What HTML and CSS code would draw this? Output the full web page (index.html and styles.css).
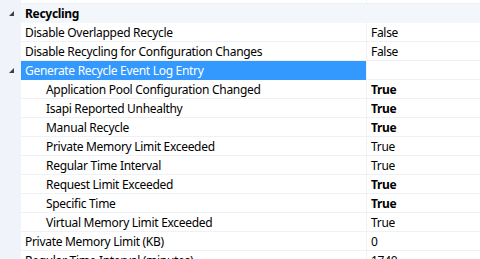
FILE: index.html
```html
<!DOCTYPE html>
<html lang="en">
<head>
    <meta charset="UTF-8">
    <title>Recycling</title>
    <link rel="stylesheet" href="styles.css">
</head>
<body>
    <div class="grid">
        <!-- row scrolled out above -->
        <div class="row stub">
            <div class="gutter"></div>
            <div class="name"></div>
            <div class="value"></div>
        </div>

        <div class="row category">
            <div class="gutter"><span class="arrow"></span></div>
            <div class="name">Recycling</div>
        </div>

        <div class="row">
            <div class="gutter"></div>
            <div class="name">Disable Overlapped Recycle</div>
            <div class="value">False</div>
        </div>
        <div class="row">
            <div class="gutter"></div>
            <div class="name">Disable Recycling for Configuration Changes</div>
            <div class="value">False</div>
        </div>
        <div class="row selected">
            <div class="gutter"><span class="arrow"></span></div>
            <div class="name">Generate Recycle Event Log Entry</div>
            <div class="value"></div>
        </div>
        <div class="row child">
            <div class="gutter"></div>
            <div class="name">Application Pool Configuration Changed</div>
            <div class="value bold">True</div>
        </div>
        <div class="row child">
            <div class="gutter"></div>
            <div class="name">Isapi Reported Unhealthy</div>
            <div class="value bold">True</div>
        </div>
        <div class="row child">
            <div class="gutter"></div>
            <div class="name">Manual Recycle</div>
            <div class="value bold">True</div>
        </div>
        <div class="row child">
            <div class="gutter"></div>
            <div class="name">Private Memory Limit Exceeded</div>
            <div class="value">True</div>
        </div>
        <div class="row child">
            <div class="gutter"></div>
            <div class="name">Regular Time Interval</div>
            <div class="value">True</div>
        </div>
        <div class="row child">
            <div class="gutter"></div>
            <div class="name">Request Limit Exceeded</div>
            <div class="value bold">True</div>
        </div>
        <div class="row child">
            <div class="gutter"></div>
            <div class="name">Specific Time</div>
            <div class="value bold">True</div>
        </div>
        <div class="row child">
            <div class="gutter"></div>
            <div class="name">Virtual Memory Limit Exceeded</div>
            <div class="value">True</div>
        </div>
        <div class="row">
            <div class="gutter"></div>
            <div class="name">Private Memory Limit (KB)</div>
            <div class="value">0</div>
        </div>
        <div class="row">
            <div class="gutter"></div>
            <div class="name">Regular Time Interval (minutes)</div>
            <div class="value">1740</div>
        </div>
    </div>
</body>
</html>
```

FILE: styles.css
```css
body {
    margin: 0;
    padding: 0;
    background-color: #fff;
    font-family: "Noto Sans", "Open Sans", sans-serif;
    font-size: 12px;
    letter-spacing: -0.3px;
    color: #000;
    overflow: hidden;
}

.grid {
    display: flex;
    flex-direction: column;
}

.row {
    display: flex;
    height: 19px;
    line-height: 19px;
}

.row.stub {
    height: 4px;
}

.gutter {
    width: 21px;
    flex: none;
    background-color: #f0f3f9;
    position: relative;
}

.name {
    width: 345px;
    flex: none;
    padding-left: 4px;
    box-sizing: border-box;
    border-bottom: 1px solid #eef1f6;
    white-space: nowrap;
    overflow: hidden;
}

.value {
    flex: 1;
    padding-left: 4px;
    border-left: 1px solid #eef1f6;
    border-bottom: 1px solid #eef1f6;
    white-space: nowrap;
}

.bold {
    font-weight: bold;
}

.child .name {
    padding-left: 25px;
}

.category {
    background-color: #f3f6fb;
}

.category .name {
    flex: 1;
    width: auto;
    font-weight: bold;
    border-bottom: none;
}

.selected .name {
    background-color: #3399ff;
    color: #fff;
    border-bottom-color: #3399ff;
}

/* expanded glyph */
.arrow {
    position: absolute;
    left: 9px;
    top: 7px;
    width: 0;
    height: 0;
    border-left: 5px solid transparent;
    border-bottom: 5px solid #404040;
}
```
